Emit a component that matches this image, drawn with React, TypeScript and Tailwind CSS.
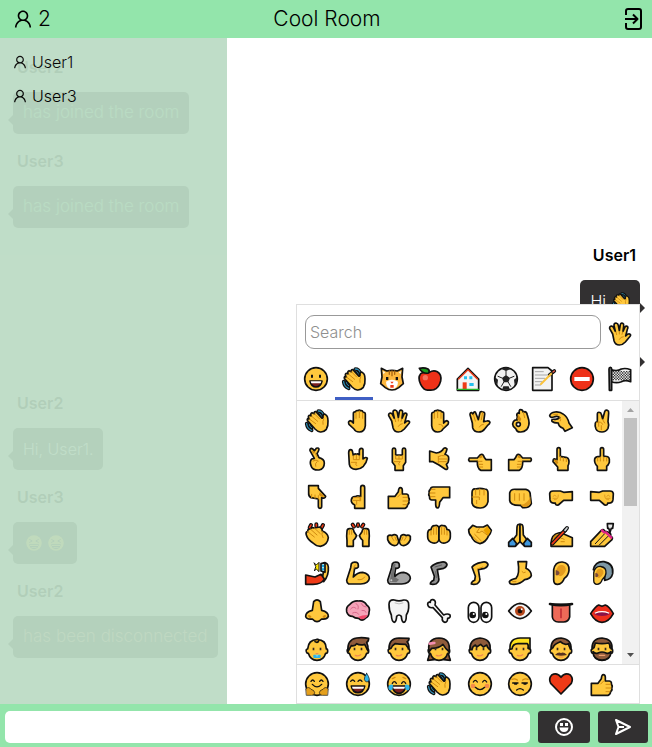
import type { ReactNode } from "react";
import { AiOutlineUser } from "react-icons/ai";

const SKIN = "#ffc83d";
const SHADE = "#d08a10";
const INK = "#111111";

type ShapeProps = { d: string; f?: string };
type LineProps = { d: string; c?: string; w?: number };

/** Outlined, filled shape. */
const S = ({ d, f = SKIN }: ShapeProps) => <path d={d} fill={f} />;
/** Unfilled detail line. */
const L = ({ d, c = SHADE, w = 3 }: LineProps) => <path d={d} fill="none" stroke={c} strokeWidth={w} />;
/** Coloured line with a dark edge. */
const E = ({ d, c = "#2f8fb5", w = 4 }: LineProps) => (
  <>
    <path d={d} fill="none" strokeWidth={w + 7} />
    <path d={d} fill="none" stroke={c} strokeWidth={w} />
  </>
);
/** Filled shape without an edge. */
const N = ({ d, f = INK }: ShapeProps) => <path d={d} fill={f} stroke="none" />;
const Mirror = ({ children }: { children: ReactNode }) => <g transform="translate(72 0) scale(-1 1)">{children}</g>;
const Both = ({ children }: { children: ReactNode }) => (
  <>
    {children}
    <Mirror>{children}</Mirror>
  </>
);

const Disc = () => <circle cx="36" cy="36" r="34" fill={SKIN} />;

const wave = (
  <>
    <E d="M40 6 Q51 6 55 19" />
    <E d="M44 14 Q48 15 49 22" w={3} />
    <E d="M5 44 Q7 59 20 64" />
    <E d="M13 46 Q14 54 20 56" w={3} />
    <S d="M12 40 Q4 33 8 29 L13 30 Q7 22 13 19 L19 21 Q15 13 21 11 L28 14 Q26 7 33 8 L50 27 Q55 30 54 20 Q56 13 62 17 Q69 20 69 36 Q70 52 64 61 Q56 70 46 69 Q38 68 30 60 Z" />
    <L d="M13 30 L32 44 M19 21 L38 37 M28 14 L44 30 M56 30 Q52 36 54 46" />
  </>
);
const raisedBack = (
  <>
    <S d="M22 38 V14 Q22 8 28 9 Q30 3 36 5 Q40 1 44 5 Q50 4 51 10 Q58 9 58 16 V50 Q56 69 40 69 Q28 69 24 60 L9 46 Q5 38 12 35 Q18 36 22 42 Z" />
    <L d="M30 11 V28 M40 6 V26 M50 11 V28" />
  </>
);
const thumbUp = (
  <>
    <S d="M4 34 H24 L34 20 Q35 8 40 8 Q46 8 46 16 V27 H58 Q66 29 64 37 Q69 42 65 48 Q68 54 62 59 Q61 68 54 70 H4 Z" />
    <L d="M48 37 H62 M48 48 H64 M48 59 H60 M32 36 L42 26" />
  </>
);
const spread = (
  <>
    <S d="M14 36 L5 20 Q4 12 11 12 Q15 13 17 18 L22 28 L18 10 Q18 3 24 3 Q30 4 31 10 L34 26 L37 8 Q39 2 44 4 Q48 6 47 12 L45 28 L51 15 Q55 10 59 14 Q61 18 58 22 L53 42 L58 37 Q66 34 68 39 Q68 42 62 48 L52 60 Q44 69 34 69 Q22 69 18 56 Z" />
    <L d="M34 52 Q38 44 46 44 M24 30 L26 38 M34 28 V36 M44 30 L42 37" />
  </>
);
const pointLeft = (
  <>
    <S d="M4 33 H28 L36 24 Q42 20 46 25 Q48 32 54 38 H70 V70 H38 Q27 64 28 43 H4 Q0 38 4 33 Z" />
    <L d="M30 43 H42 M32 52 H44 M34 60 H44" />
    <N d="M32 32 L40 24 L44 30 L38 34 Z" f={SHADE} />
  </>
);
const fistLeft = (
  <>
    <S d="M2 26 Q3 18 12 18 H34 L44 22 L70 20 V46 H44 L28 60 Q19 62 19 54 Q4 56 3 44 Z" />
    <L d="M12 34 Q18 26 22 34 M16 44 Q28 46 28 30 M22 40 H12" w={2} />
  </>
);
const armShape =
  "M16 8 Q20 2 32 4 Q38 6 37 18 Q32 24 26 21 L22 48 Q34 34 50 34 Q70 38 70 52 Q68 68 44 69 H8 Q2 66 2 58 L14 20 Z";
const legShape =
  "M12 18 Q20 8 40 4 Q56 0 60 10 Q60 18 50 22 L31 26 L35 50 Q38 60 28 68 Q18 72 10 69 Q10 62 20 58 L22 46 Z";
const earShape = "M14 26 Q18 2 40 3 Q62 6 60 28 Q58 44 46 52 Q40 70 26 70 Q14 70 14 56 Z";
const earInside = (
  <>
    <N d="M22 28 Q26 10 40 12 Q52 16 50 28 Q46 42 34 46 Q22 44 22 28 Z" f="#e39b1c" />
    <N d="M20 28 Q28 26 32 36 Q28 46 20 42 Z" f="#7a4a3a" />
  </>
);

const FaceHead = ({ hair, f = "#8f5b3b", children }: { hair: string; f?: string; children?: ReactNode }) => (
  <>
    <path d="M8 36 Q2 36 4 44 Q6 50 10 49 Q16 70 36 70 Q56 70 62 49 Q68 50 68 42 Q68 35 64 36 Q64 8 36 8 Q10 8 8 36 Z" fill={SKIN} />
    <path d={hair} fill={f} />
    <N d="M23 32 h5 v8 h-5 Z M44 32 h5 v8 h-5 Z" f="#3a2a20" />
    {children ?? <L d="M28 55 Q36 59 44 53" c="#f08a50" w={4} />}
  </>
);

const G: Record<string, ReactNode> = {
  wave,
  raisedBack,
  spread,
  thumbUp,
  raised: (
    <Mirror>
      {raisedBack}
      <L d="M24 54 Q24 46 36 46" />
    </Mirror>
  ),
  vulcan: (
    <>
      <S d="M13 42 L6 17 Q6 10 11 11 L16 16 Q16 7 22 9 L31 32 L36 10 Q40 5 44 10 Q51 8 50 16 L47 38 L56 36 Q64 34 66 40 Q66 44 58 50 L50 60 Q44 69 32 69 Q18 69 14 56 Z" />
      <L d="M16 16 L22 36 M44 10 L40 32 M34 54 Q38 46 46 46" />
    </>
  ),
  ok: (
    <>
      <S d="M26 33 L28 24 Q24 15 30 12 L34 13 Q32 2 38 2 Q44 2 46 10 L50 8 Q56 8 58 18 L62 32 Q66 50 56 62 Q48 70 36 69 Q26 69 24 60 L16 52 Q12 44 16 38 Q20 32 28 33 Z" />
      <N d="M30 16 L40 30 L36 38 L28 30 Z" f={SHADE} />
      <L d="M46 10 L50 26" />
      <circle cx="31" cy="46" r="6" fill="#fff" />
    </>
  ),
  pinch: (
    <>
      <S d="M2 20 Q4 11 18 9 Q32 7 44 16 Q56 24 60 42 L70 56 L48 67 L42 58 Q28 52 28 42 Q14 42 9 37 Q6 30 16 31 Q26 32 32 26 Q26 19 14 24 Q4 27 2 20 Z" />
      <L d="M32 26 Q38 30 34 36 M14 16 H26" />
    </>
  ),
  victory: (
    <>
      <S d="M22 38 L22 16 Q22 9 28 10 Q33 10 34 16 L38 30 L44 8 Q46 2 52 4 Q57 6 56 12 L54 38 Q58 48 54 58 Q48 69 36 69 Q22 69 18 60 Q14 50 16 42 Q18 38 22 38 Z" />
      <L d="M20 40 Q34 36 38 46 M26 40 V52 M38 32 L44 42 M34 50 V62" />
    </>
  ),
  crossed: (
    <>
      <S d="M28 34 L15 11 Q14 4 20 4 Q25 5 28 12 L34 4 Q40 1 42 6 Q42 11 36 20 L42 32 Q58 36 58 48 Q58 66 42 69 Q22 70 18 56 Q13 44 20 36 Z" />
      <L d="M28 14 L36 30 M24 42 Q34 36 40 42 M36 44 Q28 50 32 58" />
      <N d="M20 8 L28 16 L24 22 Z" f={SHADE} />
    </>
  ),
  loveYou: (
    <>
      <S d="M8 18 Q8 8 14 8 Q19 8 20 16 L22 25 Q26 18 31 22 Q36 18 40 24 V12 Q40 4 46 4 Q52 4 51 12 V36 Q60 28 64 34 Q62 46 52 58 Q44 66 30 67 Q12 66 10 52 Z" />
      <L d="M22 26 V38 H40 V26 M31 24 V38 M16 46 H32 Q26 52 32 56" />
    </>
  ),
  horns: (
    <>
      <S d="M16 10 Q16 3 21 3 Q26 3 26 10 V24 H46 V10 Q46 3 51 3 Q56 3 56 10 V46 L49 56 V70 H24 V56 L16 46 Z" />
      <L d="M26 26 V36 H46 V26 M36 26 V36 M22 44 H40 Q32 48 36 54" />
    </>
  ),
  callMe: (
    <>
      <S d="M8 12 L28 18 Q44 16 50 4 Q56 0 60 6 Q58 16 54 22 Q66 26 65 34 Q66 46 58 52 L62 62 Q62 70 54 66 L36 54 L18 44 H8 Z" />
      <L d="M36 28 Q42 24 52 26 M36 36 H60 M36 44 H58 M34 28 V48" />
    </>
  ),
  pointLeft,
  pointRight: <Mirror>{pointLeft}</Mirror>,
  pointUp: (
    <>
      <S d="M24 38 V8 Q24 2 29 2 Q34 2 34 8 V28 L54 32 Q60 34 60 44 Q60 52 57 56 V70 H26 V60 L12 44 Q12 34 18 36 Z" />
      <L d="M34 28 V40 M43 32 V42 M52 34 V44" />
      <N d="M14 38 L24 38 L28 48 L22 52 Z" f={SHADE} />
    </>
  ),
  middle: (
    <>
      <S d="M31 28 V8 Q31 2 36 2 Q41 2 41 8 V28 Q57 26 58 36 V46 Q54 56 50 58 V70 H22 V58 Q12 48 14 36 Q16 28 31 28 Z" />
      <L d="M23 32 V42 M31 30 V42 M41 30 V42 M50 32 V42" />
    </>
  ),
  pointDown: (
    <>
      <S d="M11 2 H40 V10 L62 34 Q60 42 50 38 V64 Q50 70 45 70 Q40 70 40 64 V42 L18 38 Q10 34 11 24 Z" />
      <L d="M20 38 V28 M30 40 V30 M40 42 V32" />
      <N d="M44 22 L58 34 L50 36 L42 30 Z" f={SHADE} />
    </>
  ),
  indexUp: (
    <>
      <S d="M44 32 V8 Q44 1 50 1 Q56 1 56 8 V70 H26 V60 Q14 54 16 44 Q18 34 28 35 Q34 30 44 34 Z" />
      <L d="M22 38 H42 V48 M22 46 H40 M32 48 V58 M44 36 V46" />
    </>
  ),
  thumbDown: (
    <g transform="rotate(180 36 36)">
      <S d="M4 34 H24 L34 20 Q35 3 40 3 Q46 3 46 14 V27 H58 Q66 29 64 37 Q69 42 65 48 Q68 54 62 59 Q61 66 54 66 H4 Z" />
      <L d="M48 37 H62 M48 48 H64 M48 59 H60" />
    </g>
  ),
  fist: (
    <>
      <S d="M12 24 Q12 10 22 12 Q36 8 50 12 Q60 12 60 24 V50 Q56 68 38 69 Q16 70 12 54 Z" />
      <L d="M23 14 V30 M35 12 V30 M48 14 V30 M12 36 H34 V44 M26 46 V56" />
    </>
  ),
  punch: (
    <>
      <S d="M5 24 Q8 11 24 13 H54 Q68 16 67 32 L70 56 Q64 70 44 68 L38 61 Q6 62 5 46 Z" />
      <N d="M38 60 Q60 56 67 34 L68 54 Q62 68 46 66 Z" f="#e09a1c" />
      <L d="M20 26 V46 M34 26 V46 M48 26 V46" />
    </>
  ),
  fistLeft,
  fistRight: <Mirror>{fistLeft}</Mirror>,
  clap: (
    <>
      <E d="M14 14 L18 6 M34 10 V4 M50 14 L54 6" c="#f03a17" w={5} />
      <S d="M4 36 Q1 28 8 25 Q8 17 16 18 Q20 11 28 15 L44 12 Q52 16 52 24 Q68 30 70 44 Q68 66 46 70 Q34 70 24 60 Q8 50 4 36 Z" />
      <L d="M8 26 L28 42 M16 18 L36 36 M28 15 L46 32 M52 26 Q48 34 54 44" />
    </>
  ),
  hooray: (
    <>
      <E d="M24 11 L20 5 M36 9 V4 M48 11 L52 5" c="#f03a17" w={5} />
      <Both>
        <S d="M3 70 V52 Q1 40 3 24 Q4 16 12 17 Q22 14 24 26 L32 38 Q28 48 22 52 V70 Z" />
        <L d="M10 22 V34 M17 22 V34" />
      </Both>
    </>
  ),
  openHands: (
    <Both>
      <S d="M2 40 Q8 34 15 38 Q22 32 30 38 L35 54 Q34 68 22 68 Q8 66 2 50 Z" />
      <L d="M14 42 L20 52 M24 42 L28 52" />
    </Both>
  ),
  palms: (
    <Both>
      <S d="M2 30 Q4 18 12 20 Q14 8 22 8 Q34 4 36 16 V48 Q34 62 18 60 Q2 56 2 42 Z" />
      <L d="M12 24 V36 M20 14 V34 M28 12 V34" />
    </Both>
  ),
  handshake: (
    <>
      <S d="M2 20 L14 7 L26 12 H46 L58 6 L70 22 Q68 32 62 38 Q54 58 36 62 Q16 58 10 40 Q2 34 2 20 Z" />
      <N d="M58 10 L68 24 L60 38 L46 22 Z" f="#e9a000" />
      <L d="M34 16 L26 28 Q34 32 42 24 L60 38 M14 40 L30 56 M20 34 L40 54" />
    </>
  ),
  pray: (
    <Both>
      <S d="M36 4 Q28 2 27 12 L26 36 L12 54 L24 68 L36 56 Z" />
      <S d="M2 58 L14 46 L26 62 L22 70 H2 Z" f="#3f97dc" />
    </Both>
  ),
  writing: (
    <>
      <S d="M6 60 Q8 34 28 30 Q40 26 46 34 L70 44 V70 H6 Z" />
      <N d="M12 44 Q18 32 32 34 L16 52 Z" f={SHADE} />
      <E d="M10 62 L48 22" c="#f03a17" w={5} />
      <E d="M48 22 L54 15" c="#cfd4d8" w={5} />
      <L d="M36 46 Q44 44 46 50 M36 56 H46" />
    </>
  ),
  nails: (
    <>
      <S d="M2 70 V56 L34 22 Q40 16 44 24 L56 28 Q64 30 62 40 Q70 42 66 50 L44 70 Z" />
      <L d="M16 62 L44 32 M28 66 L56 38" c={INK} />
      <L d="M36 22 L42 28 M48 28 L54 34 M58 38 L64 44" c="#e0218a" w={7} />
      <S d="M52 2 H70 L68 16 H64 L60 28 L56 16 H53 Z" f="#e6e6e6" />
    </>
  ),
  selfie: (
    <>
      <S d="M50 54 Q58 34 56 6 Q68 4 70 18 Q72 44 56 62 Z" />
      <S d="M2 42 L30 48 L48 40 L58 54 Q50 70 24 70 H2 Z" f="#ee3a17" />
      <S d="M48 8 L60 5 V34 L48 30 Z" f="#9fe4f5" />
      <N d="M51 12 h6 v6 h-6 Z M51 22 h6 v6 h-6 Z" f="#15a6e0" />
      <path d="M28 6 L34 12 L42 4 V32 L34 24 L28 30 L32 18 Z" fill="#ffe600" strokeWidth="3" />
    </>
  ),
  muscle: (
    <>
      <S d={armShape} />
      <L d="M36 56 Q50 58 56 48 M24 22 Q22 14 28 12" />
    </>
  ),
  robotArm: (
    <>
      <S d={armShape} f="#a3a3a3" />
      <N d="M18 10 L26 8 L20 46 L36 56 L28 64 L8 62 L12 40 Z" f="#6f6f6f" />
      <circle cx="13" cy="58" r="3" fill="#ccc" stroke="none" />
    </>
  ),
  robotLeg: (
    <>
      <S d={legShape} f="#8f8f8f" />
      <L d="M24 18 L44 12 M26 32 L28 50" c="#5f5f5f" />
    </>
  ),
  leg: (
    <>
      <S d={legShape} />
      <L d="M28 24 L44 18" />
    </>
  ),
  foot: (
    <>
      <S d="M30 2 H56 L54 22 Q70 30 70 44 Q66 54 50 56 Q36 70 18 70 Q4 70 4 62 Q8 55 24 52 Q36 40 30 2 Z" />
      <L d="M42 32 Q46 38 52 34 M14 62 H24" />
    </>
  ),
  ear: (
    <>
      <S d={earShape} />
      {earInside}
    </>
  ),
  hearingAid: (
    <>
      <S d="M10 26 Q16 0 42 2 Q72 8 68 38 Q64 56 44 58 L44 30 Z" f="#7d98a5" />
      <g transform="translate(0 14) scale(.8)">
        <S d={earShape} />
        {earInside}
      </g>
    </>
  ),
  nose: (
    <>
      <S d="M26 8 Q36 -3 46 8 L50 34 Q70 38 70 52 Q66 62 50 60 Q36 76 22 60 Q4 62 2 52 Q2 38 22 34 Z" />
      <N d="M8 50 Q14 44 20 54 L14 58 Z M64 50 Q58 44 52 54 L58 58 Z" f={SHADE} />
    </>
  ),
  brain: (
    <>
      <S d="M2 38 Q-1 24 12 16 Q22 4 38 6 Q54 4 62 18 Q74 26 69 40 Q70 52 58 58 Q48 68 38 58 Q26 58 20 52 Q6 52 2 38 Z" f="#f5a3b8" />
      <N d="M36 54 Q48 48 64 48 Q58 62 46 61 Z" f="#ef4a6a" />
      <L d="M14 30 Q22 20 30 28 M30 14 Q40 18 36 30 M46 14 Q50 24 60 24 M20 42 Q32 36 38 46 M48 34 Q58 32 60 40" c="#d8688a" />
    </>
  ),
  tooth: (
    <>
      <S d="M6 16 Q6 1 22 3 Q36 8 50 3 Q66 2 65 18 Q66 36 58 48 Q58 70 50 70 Q44 68 43 52 Q36 44 29 52 Q28 68 22 70 Q14 68 13 48 Q6 36 6 16 Z" f="#f3f3f3" />
      <L d="M24 12 Q36 18 48 12" c="#bdbdbd" />
    </>
  ),
  bone: (
    <S
      d="M2 16 Q2 8 10 10 Q10 1 18 2 Q28 4 24 18 L50 48 Q62 42 69 48 Q72 56 62 58 Q62 70 54 70 Q44 68 46 56 L18 26 Q4 28 2 16 Z"
      f="#f5f5f5"
    />
  ),
  eyes: (
    <>
      <rect x="1" y="10" width="32" height="60" rx="16" fill="#fff" />
      <rect x="39" y="10" width="32" height="60" rx="16" fill="#fff" />
      <circle cx="14" cy="48" r="10" fill={INK} stroke="none" />
      <circle cx="52" cy="48" r="10" fill={INK} stroke="none" />
      <circle cx="17" cy="45" r="3" fill="#fff" stroke="none" />
      <circle cx="55" cy="45" r="3" fill="#fff" stroke="none" />
    </>
  ),
  eye: (
    <>
      <S d="M2 36 Q18 14 36 13 Q56 14 70 36 Q54 58 36 59 Q18 58 2 36 Z" f="#f5f5f5" />
      <circle cx="36" cy="36" r="15" fill="#b5481c" stroke="none" />
      <circle cx="36" cy="36" r="7" fill="#1a0d08" stroke="none" />
      <circle cx="41" cy="31" r="3" fill="#fff" stroke="none" />
    </>
  ),
  tongue: (
    <>
      <S d="M10 16 H62 V54 Q58 69 44 69 H28 Q12 68 10 54 Z" f="#ee6a58" />
      <L d="M3 15 Q36 22 69 15" c={INK} w={8} />
      <L d="M36 30 V56" c="#b91d2c" w={4} />
    </>
  ),
  lips: (
    <>
      <S d="M2 44 Q16 22 26 18 L36 22 L46 18 Q58 22 70 44 Q56 70 36 70 Q16 70 2 44 Z" f="#ee2f1c" />
      <N d="M10 44 Q36 34 62 44 Q36 58 10 44 Z" f="#8b1247" />
      <L d="M16 42 Q36 34 56 42" c="#fff" w={4} />
    </>
  ),
  baby: (
    <>
      <FaceHead hair="M32 8 Q44 4 40 14 Q36 18 30 14" f="#e39b1c">
        <rect x="25" y="53" width="22" height="10" rx="2" fill="#2fb4e6" stroke="none" />
        <N d="M32 48 h8 v3 h-8 Z" f="#f08a50" />
      </FaceHead>
      <L d="M33 56 Q36 60 39 56" c="#b9efff" w={2} />
    </>
  ),
  child: <FaceHead hair="M6 44 Q2 8 32 3 Q48 0 68 4 Q68 14 62 16 Q68 28 66 42 Q60 30 56 22 Q42 26 32 20 Q28 28 16 26 Q10 36 6 44 Z" />,
  boy: <FaceHead hair="M6 34 Q6 4 36 3 L66 4 Q66 12 60 14 Q66 20 66 34 Q60 30 56 22 Q36 22 24 20 Q14 26 12 34 Z" />,
  girl: (
    <>
      <S d="M10 40 L4 64 L2 70 L22 68 Z M62 40 L68 64 L70 70 L50 68 Z" f="#8f5b3b" />
      <FaceHead hair="M6 44 Q0 4 36 3 Q72 4 66 44 Q56 36 48 22 Q36 34 14 34 Q10 40 6 44 Z" />
      <L d="M8 20 L22 18" c="#f48fb1" w={8} />
    </>
  ),
  person: <FaceHead hair="M6 38 Q4 6 36 3 Q70 6 66 38 Q58 34 56 24 L46 30 L38 22 L26 30 L22 24 Q12 30 12 38 Z" />,
  blond: <FaceHead hair="M6 36 Q4 4 36 3 H66 V34 L60 34 Q62 22 58 20 H30 Q14 20 12 36 Z" f="#ffe11a" />,
  mustache: (
    <FaceHead hair="M6 34 Q6 4 36 3 Q68 6 66 36 Q60 30 58 20 Q46 26 34 14 Q14 22 12 32 Z">
      <N d="M18 54 Q28 44 36 48 Q44 44 54 54 Q36 58 18 54 Z" f="#5a3420" />
      <L d="M30 60 H42" c="#f08a50" w={3} />
    </FaceHead>
  ),
  beard: (
    <FaceHead hair="M6 34 Q6 4 36 3 Q68 6 66 34 L60 32 Q60 22 56 18 Q36 22 16 18 L12 32 Z">
      <path d="M9 44 Q16 52 24 48 Q36 42 48 48 Q56 52 63 44 Q62 69 36 69 Q10 69 9 44 Z" fill="#8f5b3b" />
      <L d="M28 55 H44" c="#f0a070" w={4} />
    </FaceHead>
  ),
  hug: (
    <>
      <Disc />
      <L d="M18 28 Q23 20 28 28 M44 28 Q49 20 54 28" c={INK} w={4} />
      <L d="M22 37 Q36 52 50 37" c={INK} w={4} />
      <Both>
        <path d="M3 50 Q12 42 18 52 Q28 54 29 62 Q28 70 20 70 H5 Z" fill="#e5a01c" strokeWidth="2" />
      </Both>
    </>
  ),
  sweat: (
    <>
      <Disc />
      <L d="M14 28 Q20 20 26 28 M36 28 Q42 20 48 28" c={INK} w={4} />
      <S d="M16 42 H56 Q52 62 36 62 Q20 62 16 42 Z" f="#7a1f1f" />
      <N d="M18 44 H54 L52 50 H20 Z" f="#fff" />
      <path d="M62 4 Q54 16 55 22 Q57 30 63 30 Q70 29 70 21 Q69 14 62 4 Z" fill="#2fb4e6" strokeWidth="2" />
    </>
  ),
  joy: (
    <>
      <Disc />
      <L d="M16 20 L24 16 M56 20 L48 16" w={4} />
      <L d="M16 34 Q22 24 28 34 M44 34 Q50 24 56 34" c={INK} w={4} />
      <S d="M16 42 H56 Q52 64 36 64 Q20 64 16 42 Z" f="#7a1f1f" />
      <N d="M18 44 H54 L52 50 H20 Z" f="#fff" />
      <Both>
        <path d="M18 38 Q4 36 4 48 Q6 58 14 54 Q19 48 18 38 Z" fill="#2fb4e6" stroke="none" />
      </Both>
    </>
  ),
  blush: (
    <>
      <Disc />
      <L d="M16 30 Q22 20 28 30 M44 30 Q50 20 56 30" c={INK} w={4} />
      <circle cx="15" cy="42" r="7" fill="#f58a4a" stroke="none" />
      <circle cx="57" cy="42" r="7" fill="#f58a4a" stroke="none" />
      <L d="M22 46 Q36 60 50 46" c={INK} w={4} />
    </>
  ),
  unamused: (
    <>
      <Disc />
      <L d="M12 22 Q20 18 28 24 M44 24 Q52 18 60 22" w={4} />
      <L d="M14 33 H30 M42 33 H58 M20 36 H26 M48 36 H54" c={INK} w={4} />
      <L d="M26 54 Q36 46 46 54" c={INK} w={4} />
    </>
  ),
  heart: <S d="M36 66 L5 34 Q-2 20 8 9 Q24 0 36 16 Q48 0 64 9 Q74 20 67 34 Z" f="#ee3a17" />,
  grin: (
    <>
      <Disc />
      <N d="M21 23 h6 v9 h-6 Z M45 23 h6 v9 h-6 Z" />
      <S d="M18 42 H54 Q50 60 36 60 Q22 60 18 42 Z" f="#7a1f1f" />
      <N d="M20 43 H52 L50 49 H22 Z" f="#fff" />
    </>
  ),
  cat: (
    <>
      <S d="M6 30 L4 4 L20 12 Q36 8 52 12 L68 4 L66 30 L70 50 L56 62 Q36 76 16 62 L2 50 Z" f="#fdb73e" />
      <L d="M28 12 V22 M36 12 V26 M44 12 V22" c="#a86412" w={4} />
      <N d="M18 44 Q36 32 54 44 Q54 64 36 66 Q18 64 18 44 Z" f="#fff" />
      <N d="M18 30 h7 v9 h-7 Z M47 30 h7 v9 h-7 Z" />
      <N d="M31 44 H41 L36 50 Z M31 54 H41 V62 H31 Z" f="#ee3a17" />
      <N d="M8 12 L16 16 L10 22 Z M64 12 L56 16 L62 22 Z" f="#fff3d6" />
    </>
  ),
  apple: (
    <>
      <S d="M32 16 Q20 12 8 20 Q-2 32 8 52 Q18 72 32 69 Q42 70 48 68 Q62 64 68 42 Q72 22 58 14 Q46 8 34 16 Z" f="#ee3118" />
      <S d="M4 4 Q18 0 30 6 Q36 10 32 18 Q14 22 4 4 Z" f="#1d9b1d" />
      <circle cx="22" cy="32" r="8" fill="#f4725e" stroke="none" />
    </>
  ),
  house: (
    <>
      <S d="M4 70 V36 L36 4 L68 36 V70 Z" f="#f4f4f4" />
      <L d="M8 36 L36 8 L64 36" c="#ee3a17" w={4} />
      <N d="M20 46 h12 v22 h-12 Z" f="#ee3a17" />
      <N d="M24 28 h9 v9 h-9 Z M40 28 h9 v9 h-9 Z M40 48 h13 v9 h-13 Z" f="#27c1ef" />
      <L d="M4 67 H68" c="#27b52a" w={4} />
    </>
  ),
  soccer: (
    <>
      <circle cx="36" cy="36" r="34" fill="#f2f2f2" />
      <N d="M36 24 L48 33 L43 46 H29 L24 33 Z M22 6 L36 12 L50 6 L36 1 Z M2 30 L12 38 L10 54 L4 46 Z M70 30 L60 38 L62 54 L68 46 Z M24 68 L28 58 H44 L48 68 Z" f="#222" />
      <L d="M36 24 V12 M48 33 L60 28 M24 33 L12 28 M29 46 L22 58 M43 46 L50 58" c="#222" />
    </>
  ),
  memo: (
    <>
      <S d="M2 2 H48 L60 12 V70 H2 Z" f="#f2f2f2" />
      <L d="M10 14 H34 M10 24 H44 M10 34 H38 M10 44 H30 M10 54 H26" c="#a8a8a8" />
      <path d="M52 24 L62 16" fill="none" strokeWidth="10" />
      <L d="M27 51 L60 18" c="#fbc23a" w={6} />
      <E d="M63 15 L67 12" c="#ee5a4a" w={4} />
    </>
  ),
  noEntry: (
    <>
      <circle cx="36" cy="36" r="34" fill="#ee3118" />
      <N d="M13 30 H59 V42 H13 Z" f="#fff" />
    </>
  ),
  flag: (
    <>
      <S d="M10 8 Q28 14 40 6 Q52 2 68 8 V44 Q52 38 40 44 Q26 50 10 44 Z" f="#eee" />
      <path
        d="M14 14 H66 M14 22 H66 M14 30 H66 M14 38 H66"
        fill="none"
        stroke="#333"
        strokeWidth="4"
        strokeDasharray="4 4"
        strokeLinecap="butt"
      />
      <path
        d="M18 18 H66 M18 26 H66 M18 34 H66"
        fill="none"
        stroke="#333"
        strokeWidth="4"
        strokeDasharray="4 4"
        strokeLinecap="butt"
      />
      <S d="M3 6 Q3 1 7 1 Q11 1 11 6 V70 H4 Z" f="#777" />
    </>
  ),
  laugh: (
    <>
      <circle cx="36" cy="36" r="35" fill="#ffcf3d" stroke="none" />
      <L d="M16 20 L28 27 L16 33 M56 20 L44 27 L56 33" c={INK} w={4} />
      <N d="M14 42 H58 Q54 64 36 64 Q18 64 14 42 Z" />
      <N d="M18 45 H54 V50 H18 Z M24 55 H48 V59 H24 Z" f="#ffcf3d" />
    </>
  ),
};

function Emoji({ name, className = "size-6" }: { name: string; className?: string }) {
  return (
    <svg
      viewBox="0 0 72 72"
      className={`${className} shrink-0 overflow-visible`}
      stroke={INK}
      strokeWidth="5"
      strokeLinejoin="round"
      strokeLinecap="round"
      aria-hidden="true"
    >
      {G[name]}
    </svg>
  );
}

const categories = ["grin", "wave", "cat", "apple", "house", "soccer", "memo", "noEntry", "flag"];

const people = [
  "wave", "raisedBack", "spread", "raised", "vulcan", "ok", "pinch", "victory",
  "crossed", "loveYou", "horns", "callMe", "pointLeft", "pointRight", "pointUp", "middle",
  "pointDown", "indexUp", "thumbUp", "thumbDown", "fist", "punch", "fistLeft", "fistRight",
  "clap", "hooray", "openHands", "palms", "handshake", "pray", "writing", "nails",
  "selfie", "muscle", "robotArm", "robotLeg", "leg", "foot", "ear", "hearingAid",
  "nose", "brain", "tooth", "bone", "eyes", "eye", "tongue", "lips",
  "baby", "child", "boy", "girl", "person", "blond", "mustache", "beard",
];

const recent = ["hug", "sweat", "joy", "wave", "blush", "unamused", "heart", "thumbUp"];

function EmojiButton({ name }: { name: string }) {
  return (
    <button type="button" aria-label={name} className="flex h-[38px] items-center justify-center">
      <Emoji name={name} />
    </button>
  );
}

function EmojiPicker() {
  return (
    <section aria-label="Emoji picker" className="absolute right-3 bottom-0 flex h-[400px] w-[344px] flex-col border border-[#dfdfdf] bg-white">
      <div className="flex items-center gap-[7px] pt-[10px] pr-[7px] pl-2">
        <input
          type="search"
          aria-label="Search emoji"
          placeholder="Search"
          className="h-[34px] min-w-0 flex-1 rounded-[9px] border border-[#999] bg-white px-1 text-base font-light outline-none placeholder:text-[#8f8f8f]"
        />
        <button type="button" aria-label="Skin tone" className="flex w-6 items-center justify-center pt-1">
          <Emoji name="spread" />
        </button>
      </div>
      <div role="tablist" className="mt-2 flex border-b border-[#dfdfdf]">
        {categories.map((name) => (
          <button
            key={name}
            type="button"
            role="tab"
            aria-label={name}
            aria-selected={name === "wave"}
            className={`flex h-[43px] flex-1 items-center justify-center border-b-[3px] pt-1 ${
              name === "wave" ? "border-[#3f5fc4]" : "border-transparent"
            }`}
          >
            <Emoji name={name} />
          </button>
        ))}
      </div>
      <div className="flex min-h-0 flex-1">
        <div className="grid flex-1 grid-cols-8 content-start overflow-hidden pt-px">
          {people.map((name) => (
            <EmojiButton key={name} name={name} />
          ))}
        </div>
        <div className="flex w-[17px] flex-col items-center justify-between bg-[#f1f1f1]" aria-hidden="true">
          <div className="flex flex-col items-center">
            <svg viewBox="0 0 17 17" className="size-[17px]">
              <path d="M5 11 L8.500 7 L12 11 Z" fill="#a3a3a3" />
            </svg>
            <div className="h-[88px] w-[13px] bg-[#c1c1c1]" />
          </div>
          <svg viewBox="0 0 17 17" className="size-[17px]">
            <path d="M5 6 L8.500 10 L12 6 Z" fill="#505050" />
          </svg>
        </div>
      </div>
      <div className="grid grid-cols-8 border-t border-[#dfdfdf] pr-[17px]">
        {recent.map((name) => (
          <EmojiButton key={name} name={name} />
        ))}
      </div>
    </section>
  );
}

type Tone = "user" | "joined" | "left";

const toneClass: Record<Tone, string> = {
  user: "text-base text-white",
  joined: "text-[17px] text-[#93e5ab]",
  left: "text-[17px] text-[#e5a593]",
};

function Bubble({ mine = false, tone = "user", children }: { mine?: boolean; tone?: Tone; children: ReactNode }) {
  return (
    <div
      className={`relative mb-3 flex h-[42px] w-fit items-center gap-[6px] rounded-[5px] bg-[#323031] px-[10px] font-light whitespace-nowrap ${
        toneClass[tone]
      } ${mine ? "self-end" : ""}`}
    >
      {children}
      <span
        className={`absolute top-[23px] border-y-[5px] ${
          mine
            ? "-right-[5px] border-l-[5px] border-y-transparent border-l-[#323031]"
            : "-left-[5px] border-r-[5px] border-y-transparent border-r-[#323031]"
        }`}
      />
    </div>
  );
}

function Group({ user, mine = false, children }: { user: string; mine?: boolean; children: ReactNode }) {
  return (
    <li className="flex flex-col">
      <h2 className={`flex h-10 items-center px-1 pb-[10px] font-semibold ${mine ? "self-end" : ""}`}>{user}</h2>
      {children}
    </li>
  );
}

export default function App() {
  return (
    <div className="flex h-screen flex-col overflow-hidden bg-white font-['Inter','Noto_Sans',sans-serif] text-base text-black">
      <header className="grid h-[38px] shrink-0 grid-cols-3 items-center bg-[#93e5ab] pr-[10px] pl-3">
        <button type="button" aria-label="Users in the room" className="flex items-center gap-1 text-[21px] font-light">
          <AiOutlineUser className="size-[22px]" />
          <span>2</span>
        </button>
        <h1 className="text-center text-[21px] leading-7 font-light whitespace-nowrap">Cool Room</h1>
        <button type="button" aria-label="Leave the room" className="justify-self-end">
          <svg viewBox="0 0 18 22" className="h-[22px] w-[18px]" fill="none" stroke="#000" strokeWidth="2" strokeLinejoin="round">
            <path d="M2 7 V3 Q2 1 4 1 H15 Q17 1 17 3 V19 Q17 21 15 21 H4 Q2 21 2 19 V15" />
            <path d="M1 11 H13 M9 6.500 L13.500 11 L9 15.500" />
          </svg>
        </button>
      </header>

      <main className="relative min-h-0 flex-1">
        <ul className="h-full overflow-hidden pt-[14px] pr-3 pl-[13px]">
          <Group user="User2">
            <Bubble tone="joined">has joined the room</Bubble>
          </Group>
          <Group user="User3">
            <Bubble tone="joined">has joined the room</Bubble>
          </Group>
          <Group user="User1" mine>
            <Bubble mine>
              Hi <Emoji name="wave" className="size-[18px]" />
            </Bubble>
            <Bubble mine>
              <Emoji name="wave" className="size-[18px]" />
            </Bubble>
          </Group>
          <Group user="User2">
            <Bubble>Hi, User1.</Bubble>
          </Group>
          <Group user="User3">
            <Bubble>
              <span className="flex gap-[6px] px-[3px]">
                <Emoji name="laugh" className="size-4" />
                <Emoji name="laugh" className="size-4" />
              </span>
            </Bubble>
          </Group>
          <Group user="User2">
            <Bubble tone="left">has been disconnected</Bubble>
          </Group>
        </ul>

        <aside className="absolute inset-y-0 left-0 w-[227px] bg-[#bcdbc5] opacity-94">
          <ul className="flex flex-col gap-[10px] px-3 pt-3 font-light">
            {["User1", "User3"].map((user) => (
              <li key={user} className="flex items-center gap-1">
                <AiOutlineUser className="size-4" />
                {user}
              </li>
            ))}
          </ul>
        </aside>

        <EmojiPicker />
      </main>

      <form className="flex h-[43px] shrink-0 items-center gap-2 bg-[#93e5ab] pt-[5px] pr-1 pb-[3px] pl-[5px]" onSubmit={(e) => e.preventDefault()}>
        <input type="text" aria-label="Message" className="h-8 min-w-0 flex-1 rounded-[5px] bg-white px-2 outline-none" />
        <button type="button" aria-label="Choose emoji" className="flex h-8 w-[52px] items-center justify-center rounded-[3px] bg-[#323031]">
          <svg viewBox="0 0 20 20" className="size-5" fill="none" stroke="#fff" strokeWidth="2">
            <circle cx="10" cy="10" r="8" />
            <path d="M6 6 h3 v3 h-3 Z M11 6 h3 v3 h-3 Z M5.500 10.500 H14.500 Q14 15 10 15 Q6 15 5.500 10.500 Z" fill="#fff" stroke="none" />
          </svg>
        </button>
        <button type="submit" aria-label="Send" className="flex h-8 w-[50px] items-center justify-center rounded-[3px] bg-[#323031]">
          <svg viewBox="0 0 20 20" className="size-5" fill="none" stroke="#fff" strokeWidth="2" strokeLinejoin="round">
            <path d="M3 3 L17 10 L3 17 L5.500 10 Z M5.500 10 H11" />
          </svg>
        </button>
      </form>
    </div>
  );
}
